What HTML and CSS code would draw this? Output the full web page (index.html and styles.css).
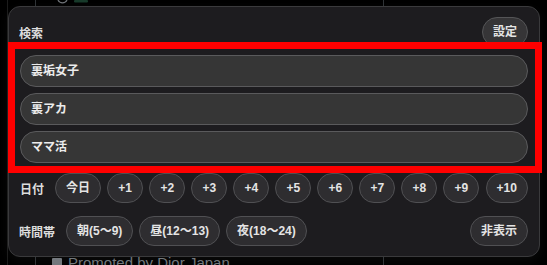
FILE: index.html
```html
<!DOCTYPE html>
<html lang="ja">
<head>
<meta charset="utf-8">
<title>検索</title>
<link rel="stylesheet" href="styles.css">
</head>
<body>
<div class="page">
  <div class="rail"></div>
  <div class="feed">
    <div class="stub">
      <svg width="40" height="6" viewBox="0 0 40 6"><path d="M2 0 A5 5 0 0 0 11 0" fill="none" stroke="#6f7378" stroke-width="1.2"/><rect x="18" y="0" width="14" height="2.5" rx="1" fill="#173a2a"/></svg>
    </div>
    <div class="promo">
      <span class="promo-icon"></span>
      <span class="promo-text">Promoted by Dior Japan</span>
    </div>
  </div>
</div>

<div class="panel">
  <div class="head">
    <span class="title">検索</span>
    <button class="chip">設定</button>
  </div>
  <div class="queries">
    <div class="query">裏垢女子</div>
    <div class="query">裏アカ</div>
    <div class="query">ママ活</div>
  </div>
  <div class="row row-date">
    <span class="label">日付</span>
    <div class="chips spread">
      <button class="chip">今日</button>
      <button class="chip">+1</button>
      <button class="chip">+2</button>
      <button class="chip">+3</button>
      <button class="chip">+4</button>
      <button class="chip">+5</button>
      <button class="chip">+6</button>
      <button class="chip">+7</button>
      <button class="chip">+8</button>
      <button class="chip">+9</button>
      <button class="chip">+10</button>
    </div>
  </div>
  <div class="row row-time">
    <span class="label">時間帯</span>
    <div class="chips">
      <button class="chip">朝(5〜9)</button>
      <button class="chip">昼(12〜13)</button>
      <button class="chip">夜(18〜24)</button>
      <button class="chip push">非表示</button>
    </div>
  </div>
</div>

<div class="highlight"></div>
</body>
</html>
```

FILE: styles.css
```css
* { box-sizing: border-box; }

html, body {
  margin: 0;
  padding: 0;
  background: #000;
}

body {
  width: 547px;
  height: 265px;
  overflow: hidden;
  position: relative;
  font-family: "Liberation Sans", "Noto Sans CJK JP", sans-serif;
}

.page {
  display: flex;
  height: 265px;
}

.rail {
  width: 8px;
  border-right: 1px solid #1c1c1c;
}

.feed {
  margin-left: 27px;
  width: 349px;
  height: 265px;
  border-left: 1px solid #2f3336;
  border-right: 1px solid #2f3336;
  display: flex;
  flex-direction: column;
  justify-content: space-between;
}

.stub {
  height: 6px;
  padding-left: 20px;
  line-height: 0;
}

.promo {
  display: flex;
  align-items: flex-start;
  gap: 6px;
  padding-left: 16px;
  height: 8px;
  color: #71767b;
  font-size: 15px;
  line-height: 18px;
}

.promo-text {
  margin-top: -3px;
}

.promo-icon {
  width: 10px;
  height: 10px;
  margin-top: 1px;
  background: #71767b;
  border-radius: 1px;
}

.panel {
  position: absolute;
  left: 8px;
  top: 6px;
  width: 532px;
  height: 251px;
  border: 1px solid #3a3a3c;
  border-radius: 12px;
  background: #1d1c1f;
  padding: 10px 11px 10px 11px;
  display: flex;
  flex-direction: column;
  box-shadow: 0 4px 12px rgba(255, 255, 255, 0.04);
}

.head {
  display: flex;
  justify-content: space-between;
  align-items: center;
  height: 30px;
}

.title {
  color: #dcdcdc;
  font-weight: bold;
  font-size: 12px;
  margin-left: -1px;
}

.chip {
  height: 30px;
  padding: 0 10px;
  border-radius: 15px;
  border: 1px solid #505053;
  background: #2e2d30;
  color: #e4e4e4;
  font-family: inherit;
  font-weight: bold;
  font-size: 12px;
  line-height: 28px;
  white-space: nowrap;
}

.head .chip {
  background: #363537;
  border-color: #555557;
}

.queries {
  margin-top: 8px;
  display: flex;
  flex-direction: column;
  gap: 6px;
}

.query {
  height: 32px;
  border-radius: 16px;
  border: 1px solid #5a5a5c;
  background: #363636;
  color: #ececec;
  font-weight: bold;
  font-size: 12px;
  line-height: 30px;
  padding-left: 10px;
}

.row {
  display: flex;
  align-items: center;
  gap: 11px;
}

.row-date { margin-top: 10px; }
.row-time { margin-top: 13px; }

.label {
  color: #dcdcdc;
  font-weight: bold;
  font-size: 12px;
  white-space: nowrap;
}

.row-time .label { margin-left: -1px; }

.chips {
  flex: 1;
  display: flex;
  gap: 6px;
}

.chips.spread {
  justify-content: space-between;
}

.push { margin-left: auto; }

.highlight {
  position: absolute;
  left: 8px;
  top: 42px;
  width: 534px;
  height: 131px;
  border: 7px solid #ff0000;
  pointer-events: none;
}
```
